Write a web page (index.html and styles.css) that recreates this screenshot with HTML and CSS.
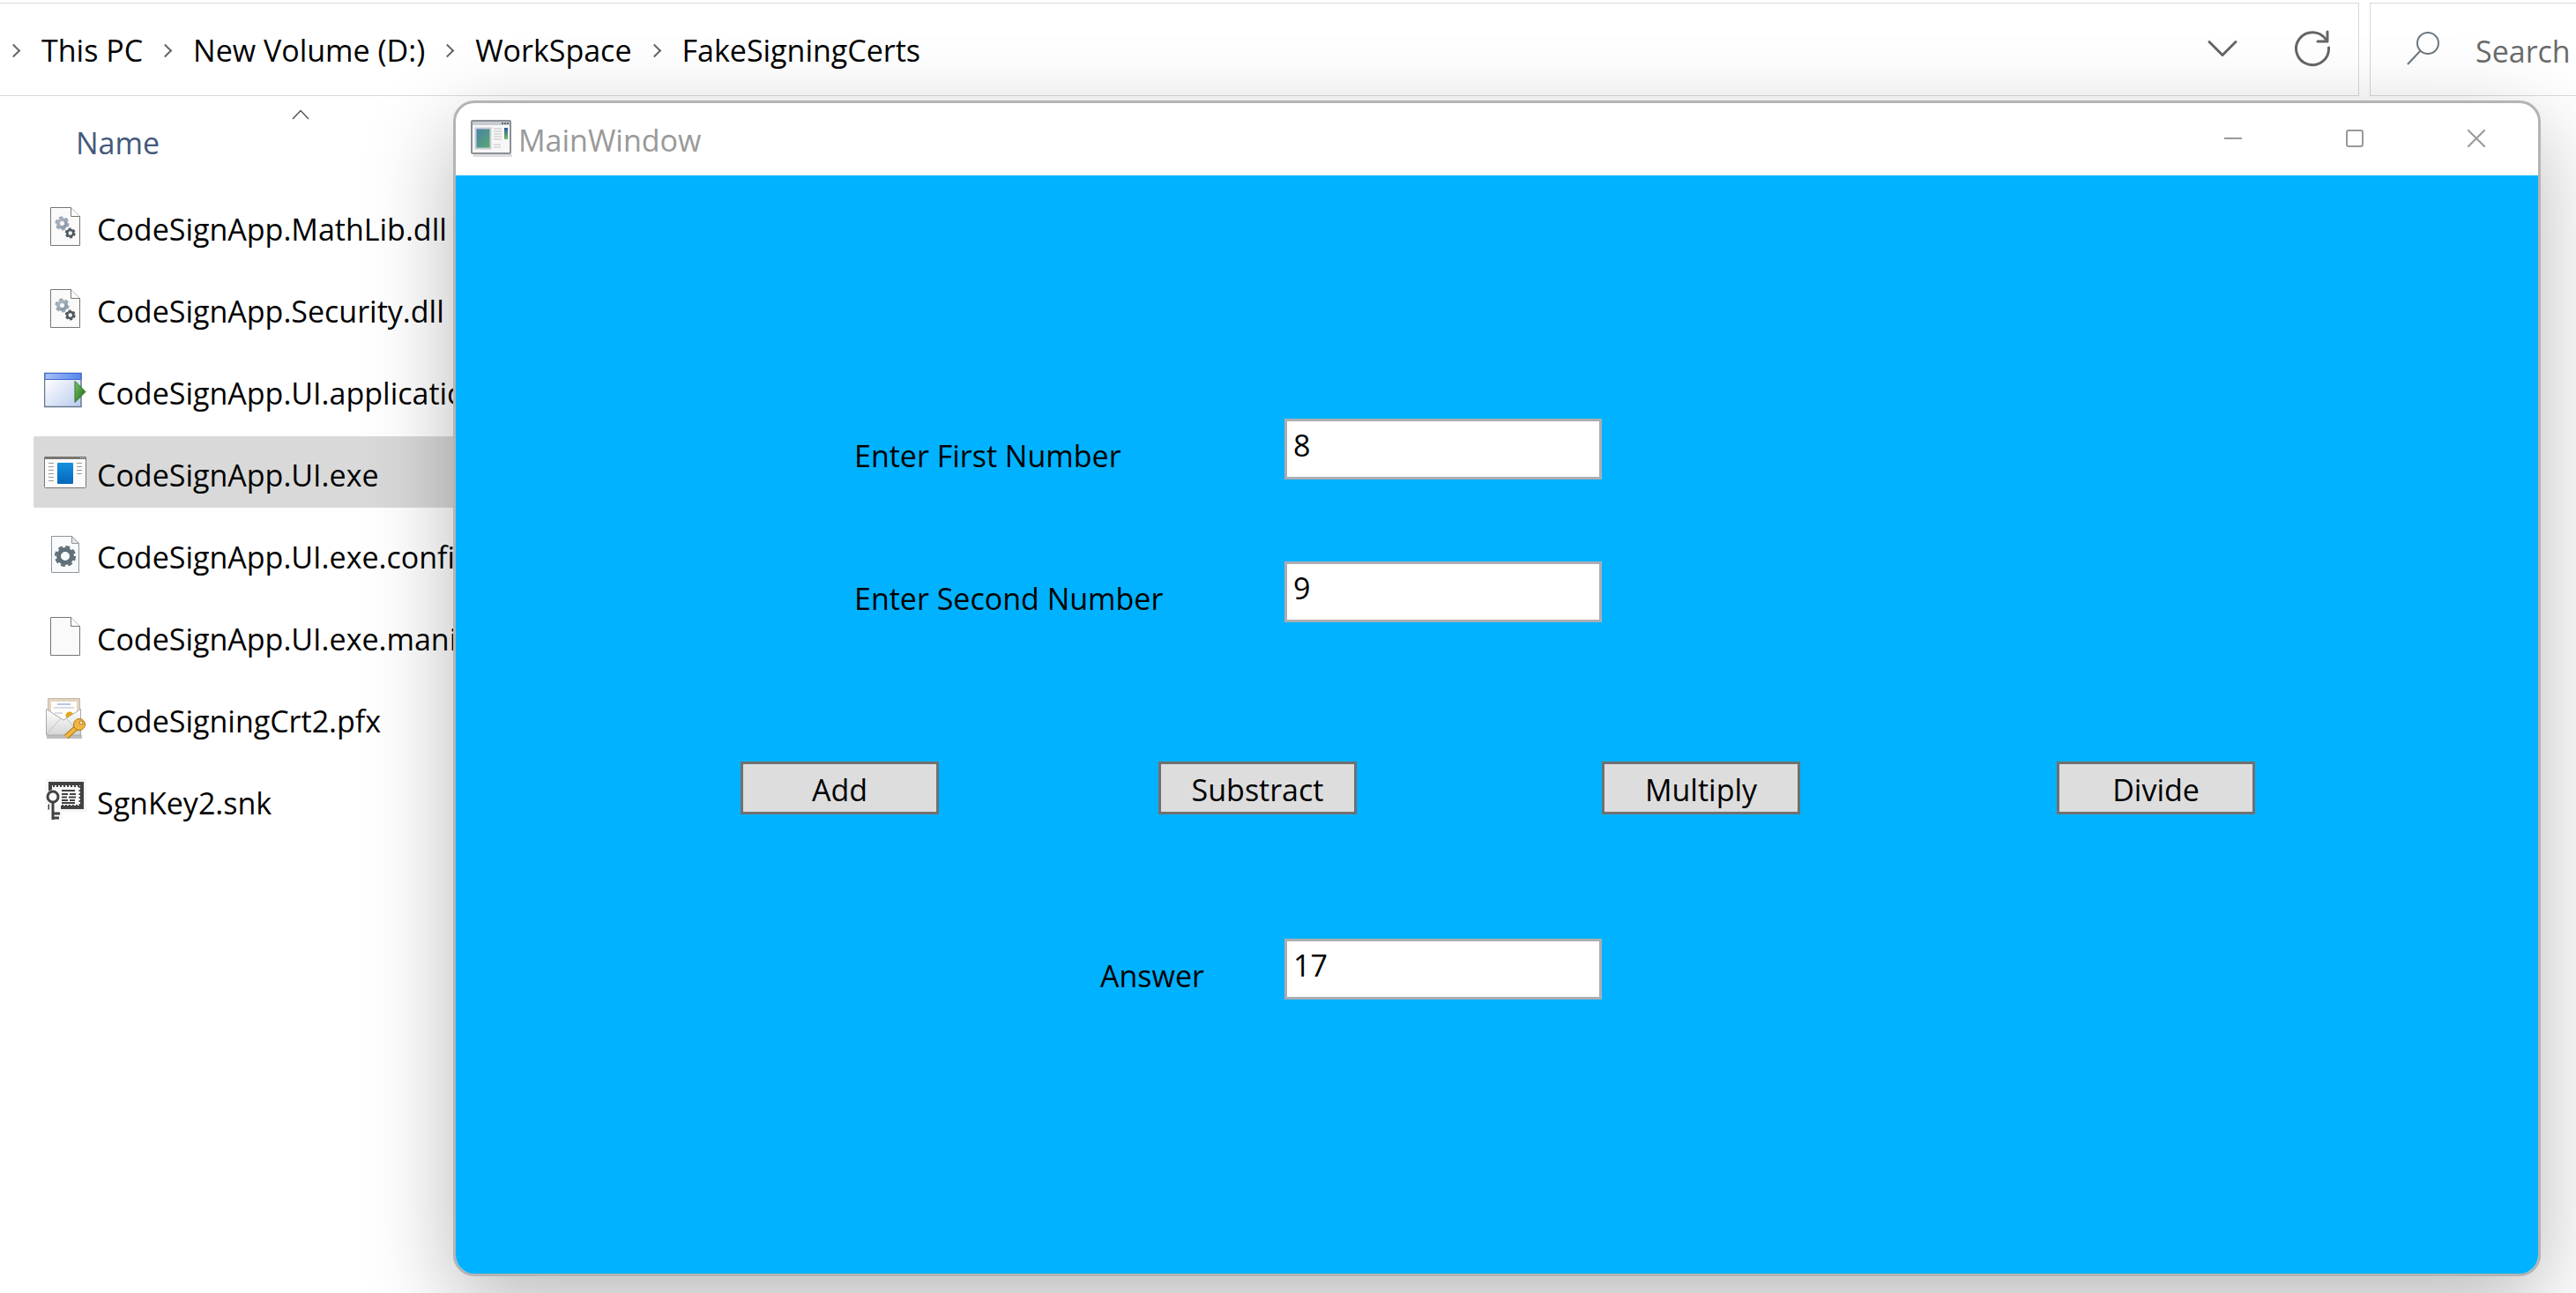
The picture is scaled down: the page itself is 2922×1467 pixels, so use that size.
FILE: index.html
```html
<!DOCTYPE html>
<html lang="en">
<head>
<meta charset="utf-8">
<title>FakeSigningCerts</title>
<link rel="stylesheet" href="styles.css">
</head>
<body>
<svg class="defs" aria-hidden="true">
  <defs>
    <linearGradient id="silver" x1="0" y1="0" x2="1" y2="1"><stop offset="0" stop-color="#b4bcc4"/><stop offset="1" stop-color="#8494a2"/></linearGradient>
    <linearGradient id="bar" x1="0" y1="0" x2="1" y2="0"><stop offset="0" stop-color="#a9c0f5"/><stop offset="1" stop-color="#5486ee"/></linearGradient>
    <linearGradient id="pane" x1="0" y1="0" x2="1" y2="1"><stop offset=".1" stop-color="#fff"/><stop offset="1" stop-color="#b9c9ee"/></linearGradient>
    <linearGradient id="play" x1="0" y1="0" x2="1" y2="1"><stop offset="0" stop-color="#7cc86c"/><stop offset="1" stop-color="#17600f"/></linearGradient>
    <linearGradient id="blue" x1="0" y1="0" x2="0" y2="1"><stop offset="0" stop-color="#1490df"/><stop offset="1" stop-color="#0566bb"/></linearGradient>
    <linearGradient id="sea" x1="0" y1="0" x2="1" y2="1"><stop offset="0" stop-color="#4a7fae"/><stop offset="1" stop-color="#57ab68"/></linearGradient>
    <linearGradient id="seabar" x1="0" y1="0" x2="0" y2="1"><stop offset="0" stop-color="#2d55a0"/><stop offset="1" stop-color="#6cc25c"/></linearGradient>
    <linearGradient id="envelope" x1="0" y1="0" x2="0" y2="1"><stop offset="0" stop-color="#fff"/><stop offset="1" stop-color="#d6d6d6"/></linearGradient>
    <symbol id="page" viewBox="0 0 48 48">
      <path d="M7.500 2.500h23l10 10v33h-33z" fill="#fafafa" stroke="#777672"/>
      <path d="M30.500 2.500v10h10" fill="#fff" stroke="#777672"/>
    </symbol>
    <symbol id="dll" viewBox="0 0 48 48">
      <use href="#page"/>
      <circle cx="20.500" cy="20.500" r="4.500" fill="none" stroke="url(#silver)" stroke-width="4"/>
      <circle cx="20.500" cy="20.500" r="6.800" fill="none" stroke="#9ba8b3" stroke-width="2.600" stroke-dasharray="4 3.120"/>
      <circle cx="29.700" cy="31.500" r="3.500" fill="none" stroke="#50595f" stroke-width="2.600"/>
      <circle cx="29.700" cy="31.500" r="5" fill="none" stroke="#50595f" stroke-width="2" stroke-dasharray="3 2.236"/>
    </symbol>
  </defs>
</svg>

<div class="explorer">
  <header class="toolbar">
    <nav class="address" aria-label="Address">
      <ol class="crumbs">
        <li><a href="#">This PC</a></li>
        <li><a href="#">New Volume (D:)</a></li>
        <li><a href="#">WorkSpace</a></li>
        <li><a href="#">FakeSigningCerts</a></li>
      </ol>
      <button class="tool" type="button" aria-label="Previous locations"><svg width="40" height="40" viewBox="0 0 40 40"><path d="M5 12.500l15 15 15-15" fill="none" stroke="#666" stroke-width="3" stroke-linecap="round" stroke-linejoin="round"/></svg></button>
      <button class="tool" type="button" aria-label="Refresh"><svg width="44" height="44" viewBox="0 0 44 44"><g fill="none" stroke="#666" stroke-width="3" stroke-linecap="round" stroke-linejoin="round"><path d="M40.500 21a18.500 18.500 0 1 1-3-9"/><path d="M39 3v11H28"/></g></svg></button>
    </nav>
    <div class="search">
      <svg width="38" height="38" viewBox="0 0 38 38"><g fill="none" stroke="#6d7880" stroke-width="2"><circle cx="24" cy="13" r="12"/><path d="M15.500 21.500L1 37"/></g></svg>
      <input class="search-box" type="text" placeholder="Search FakeSigningCerts" aria-label="Search">
    </div>
  </header>

  <main class="files">
    <button class="column" type="button">Name<svg class="sort" width="20" height="12" viewBox="0 0 20 12"><path d="M1 11l9-9.500L19 11" fill="none" stroke="#555" stroke-width="1.500"/></svg></button>
    <ul class="list">
      <li class="file"><svg class="icon" viewBox="0 0 48 48"><use href="#dll"/></svg><span>CodeSignApp.MathLib.dll</span></li>
      <li class="file"><svg class="icon" viewBox="0 0 48 48"><use href="#dll"/></svg><span>CodeSignApp.Security.dll</span></li>
      <li class="file"><svg class="icon" viewBox="0 0 48 48">
        <path d="M.5 4.500h41.500v38H.5z" fill="url(#pane)" stroke="#69788f" stroke-width="1.500"/>
        <path d="M1 4.500h41v7H1z" fill="url(#bar)" stroke="#3b66d0"/>
        <path d="M35 13.500v24l12-12z" fill="url(#play)" stroke="#2a7a22"/>
      </svg><span>CodeSignApp.UI.application</span></li>
      <li class="file selected"><svg class="icon" viewBox="0 0 48 48">
        <rect x=".5" y="6.500" width="47" height="35" rx="1" fill="#fafafa" stroke="#777672"/>
        <path d="M.5 6h47v3H.5z" fill="#777672"/><path d="M41 7.500h6" stroke="#ddd" stroke-dasharray="1 1"/>
        <rect x="15" y="13" width="18" height="24" rx="1" fill="url(#blue)"/>
        <path d="M5 13.500h6M5 17.500h6M5 21.500h6M5 25.500h6M5 29.500h6M5 33.500h6M37 13.500h6M37 17.500h6M37 21.500h6M37 25.500h6" stroke="#9a9a98"/>
      </svg><span>CodeSignApp.UI.exe</span></li>
      <li class="file"><svg class="icon" viewBox="0 0 48 48">
        <path d="M8.500 3.500h23l8 8v33h-31z" fill="#f8fafb" stroke="#8d979c"/><path d="M31.500 3.500v8h8z" fill="#e4e7e9" stroke="#8d979c"/>
        <circle cx="24" cy="26" r="7.500" fill="none" stroke="#5f7078" stroke-width="5"/>
        <circle cx="24" cy="26" r="10.800" fill="none" stroke="#5f7078" stroke-width="2.600" stroke-dasharray="5 3.482"/>
      </svg><span>CodeSignApp.UI.exe.config</span></li>
      <li class="file"><svg class="icon" viewBox="0 0 48 48"><use href="#page"/></svg><span>CodeSignApp.UI.exe.manifest</span></li>
      <li class="file"><svg class="icon" viewBox="0 0 48 48">
        <path d="M3 43h40v4H3z" fill="#bdbdbd"/>
        <path d="M4.500 1.500h36v24h-36z" fill="#e0d5c3" stroke="#c6b79f"/><path d="M8 5h29v22H8z" fill="#fffdf8"/>
        <path d="M15 8h15" stroke="#b6c4e6" stroke-width="2"/><path d="M11 12h23M12 18h9" stroke="#d6dbe8" stroke-width="2"/>
        <circle cx="29" cy="21" r="4.500" fill="#e5a514"/>
        <path d="M2.500 13.500L22 26l19.500-12.500V43h-39z" fill="url(#envelope)" stroke="#a9a9a9"/>
        <path d="M3 42l15-17M41 42L26 25" stroke="#c2c2c2" fill="none"/>
        <path d="M36 35L25 45" stroke="#a97713" stroke-width="6"/><path d="M36 35L25 45" stroke="#f4b642" stroke-width="4"/>
        <circle cx="40" cy="31" r="6.500" fill="#f4b642" stroke="#a97713"/><circle cx="42" cy="29" r="2" fill="#fff3d5" stroke="#a97713"/>
      </svg><span>CodeSigningCrt2.pfx</span></li>
      <li class="file"><svg class="icon" viewBox="0 0 48 48">
        <path d="M2 0h46v37H20v11H6V28H1z" fill="#f5f5f5"/>
        <path d="M7 5h36v27H7z" fill="#fafafa" stroke="#424242" stroke-width="4"/>
        <path d="M10 8h31M40.500 8v22M20 30h20" fill="none" stroke="#424242" stroke-width="2" stroke-dasharray="2 2"/>
        <path d="M20 13h15M20 17h7M29 17h7M20 20.500h6M28 20.500h8M20 24h7M29 24h6M20 27h15" stroke="#424242" stroke-width="1.800"/>
        <path d="M1 21a9 9 0 0 1 18 0v27H6V29z" fill="#fafafa"/>
        <circle cx="10" cy="20" r="6" fill="none" stroke="#424242" stroke-width="3"/>
        <path d="M10 27v19M10 39h8M10 44h7" fill="none" stroke="#424242" stroke-width="3"/><path d="M5 29v6" stroke="#424242"/>
      </svg><span>SgnKey2.snk</span></li>
    </ul>
  </main>
</div>

<section class="window" aria-label="MainWindow">
  <header class="titlebar">
    <svg width="48" height="44" viewBox="0 0 48 44">
      <path d="M3 40h44v3H3z" fill="#ddd"/>
      <rect x="1" y="2" width="44" height="37" rx="1" fill="#f7f7f8" stroke="#8c9096" stroke-width="2"/>
      <path d="M2 3h42v4H2z" fill="#c6cbd3"/><path d="M35 5h8" stroke="#58606c" stroke-width="2" stroke-dasharray="2 1"/>
      <path d="M5.500 10.500h17v23h-17z" fill="url(#sea)" stroke="#c9ced8" stroke-width="2"/>
      <path d="M26 11h9M26 14h9M26 17h9M26 20h9M26 23h9M26 29h8M26 32h8" stroke="#c2c2c2"/>
      <path d="M38 10h4v13h-4z" fill="url(#seabar)"/>
    </svg>
    <h1 class="title">MainWindow</h1>
    <button class="caption" type="button" aria-label="Minimize"><svg width="20" height="20" viewBox="0 0 20 20"><path d="M0 10h20" stroke="#999" stroke-width="2"/></svg></button>
    <button class="caption" type="button" aria-label="Maximize"><svg width="20" height="20" viewBox="0 0 20 20"><rect x="1" y="1" width="18" height="18" rx="2" fill="none" stroke="#999" stroke-width="2"/></svg></button>
    <button class="caption" type="button" aria-label="Close"><svg width="20" height="20" viewBox="0 0 20 20"><path d="M0 0l20 20M20 0L0 20" stroke="#999" stroke-width="2"/></svg></button>
  </header>
  <form class="client">
    <div class="field">
      <label for="first">Enter First Number</label>
      <input class="number" id="first" type="text" value="8">
    </div>
    <div class="field">
      <label for="second">Enter Second Number</label>
      <input class="number" id="second" type="text" value="9">
    </div>
    <div class="operations">
      <button class="operation" type="button">Add</button>
      <button class="operation" type="button">Substract</button>
      <button class="operation" type="button">Multiply</button>
      <button class="operation" type="button">Divide</button>
    </div>
    <div class="field answer">
      <label for="answer">Answer</label>
      <input class="number" id="answer" type="text" value="17">
    </div>
  </form>
</section>
</body>
</html>
```
FILE: styles.css
```css
* {
  box-sizing: border-box;
}

body {
  margin: 0;
  min-height: 100vh;
  overflow: hidden;
  background: #fff;
  color: #000;
  font-family: "Open Sans", "Noto Sans", sans-serif;
  font-size: 34px;
  line-height: 48px;
}

button,
input {
  margin: 0;
  padding: 0;
  border: 0;
  background: none;
  color: inherit;
  font: inherit;
}

svg {
  display: block;
  flex: none;
}

.defs {
  position: absolute;
  width: 0;
  height: 0;
}

/* Explorer */

.toolbar {
  display: flex;
  gap: 12px;
  padding-top: 3px;
}

.address,
.search {
  display: flex;
  align-items: center;
  height: 106px;
  padding-bottom: 2px;
  border: 1px solid #d9d9d9;
}

.address {
  flex: 1;
  border-left: 0;
  padding-right: 30px;
  gap: 60px;
}

.crumbs {
  display: flex;
  flex: 1;
  margin: 0;
  padding: 4px 0 0 13px;
  list-style: none;
}

.crumbs li {
  display: flex;
  align-items: center;
}

.crumbs li::before {
  content: "";
  width: 9px;
  height: 9px;
  margin: 0 26px 0 -3px;
  border: solid #666;
  border-width: 2px 2px 0 0;
  transform: rotate(45deg);
}

.crumbs li + li::before {
  margin-left: 20px;
}

.crumbs a {
  color: inherit;
  text-decoration: none;
}

.search {
  width: 234px;
  border-right: 0;
  padding-left: 41px;
  gap: 40px;
  overflow: hidden;
}

.search-box {
  flex: 1;
  min-width: 0;
  padding-top: 6px;
}

.search-box::placeholder {
  color: #6b6b6b;
  opacity: 1;
}

.column {
  display: flex;
  padding: 29px 0 29px 86px;
  color: #44597a;
}

.sort {
  margin: -14px 0 0 150px;
}

.list {
  display: grid;
  gap: 12px;
  margin: 0;
  padding: 1px 0 0 38px;
  list-style: none;
}

.file {
  display: flex;
  align-items: center;
  gap: 12px;
  width: 700px;
  height: 81px;
  padding-left: 12px;
  white-space: nowrap;
}

.file span {
  padding-top: 6px;
}

.selected {
  border-radius: 2px;
  background: #d9d9d9;
}

.icon {
  width: 48px;
  height: 48px;
}

/* Application window floating over the explorer */

.window {
  position: absolute;
  inset: 114px 40px 19px 514px;
  display: flex;
  flex-direction: column;
  overflow: hidden;
  border: 3px solid #b4b4b4;
  border-radius: 24px;
  background: #fff;
  box-shadow: 0 32px 100px rgba(0, 0, 0, 0.28);
}

.titlebar {
  display: flex;
  align-items: center;
  height: 82px;
  padding: 0 1px 2px 17px;
}

.title {
  flex: 1;
  margin: 0;
  padding: 4px 0 0 6px;
  color: #999;
  font-size: 34px;
  font-weight: 400;
}

.caption {
  display: grid;
  place-items: center;
  width: 138px;
  height: 80px;
}

.client {
  flex: 1;
  padding-top: 276px;
  background: #00b2ff;
}

.field {
  display: grid;
  grid-template-columns: 452fr 488fr 1422fr;
  margin-bottom: 93px;
}

.field label {
  grid-column: 2;
  padding-top: 18px;
}

.number {
  width: 360px;
  height: 69px;
  padding: 0 7px 10px;
  border: 3px solid #abadb3;
  background: #fff;
}

.operations {
  display: grid;
  grid-template-columns: 323fr 474fr 503fr 516fr 546fr;
  margin: 158px 0 141px;
}

.operation {
  width: 225px;
  height: 60px;
  padding-top: 3px;
  border: 3px solid #707070;
  background: #ddd;
}

.operation:first-child {
  grid-column: 2;
}

.answer {
  grid-template-columns: 731fr 209fr 1422fr;
  margin: 0;
}
```
